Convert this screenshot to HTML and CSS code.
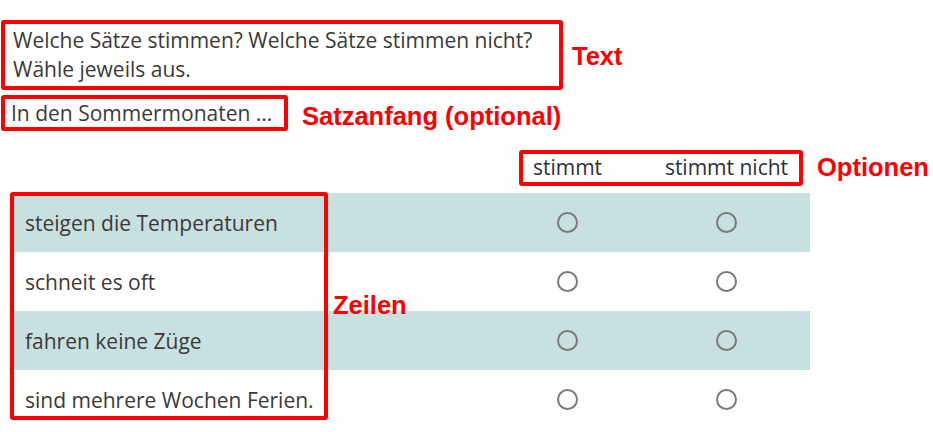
FILE: index.html
```html
<!DOCTYPE html>
<html lang="de">
<head>
<meta charset="utf-8">
<link rel="stylesheet" href="styles.css">
</head>
<body>
<div class="page">
  <div class="question">Welche Sätze stimmen? Welche Sätze stimmen nicht?<br>Wähle jeweils aus.</div>
  <div class="start">In den Sommermonaten ...</div>
  <div class="grid">
    <div class="head empty"></div>
    <div class="head">stimmt</div>
    <div class="head last">stimmt nicht</div>

    <div class="cell label alt">steigen die Temperaturen</div>
    <div class="cell alt"><span class="radio"></span></div>
    <div class="cell alt last"><span class="radio"></span></div>

    <div class="cell label">schneit es oft</div>
    <div class="cell"><span class="radio"></span></div>
    <div class="cell last"><span class="radio"></span></div>

    <div class="cell label alt">fahren keine Züge</div>
    <div class="cell alt"><span class="radio"></span></div>
    <div class="cell alt last"><span class="radio"></span></div>

    <div class="cell label">sind mehrere Wochen Ferien.</div>
    <div class="cell"><span class="radio"></span></div>
    <div class="cell last"><span class="radio"></span></div>
  </div>

  <div class="box box-text"></div>
  <div class="note note-text">Text</div>
  <div class="box box-start"></div>
  <div class="note note-start">Satzanfang (optional)</div>
  <div class="box box-options"></div>
  <div class="note note-options">Optionen</div>
  <div class="box box-rows"></div>
  <div class="note note-rows">Zeilen</div>
</div>
</body>
</html>
```
FILE: styles.css
```css
html, body {
  margin: 0;
  padding: 0;
  background: #fff;
}
.page {
  position: relative;
  width: 933px;
  height: 432px;
  overflow: hidden;
  font-family: "Open Sans", "Noto Sans", sans-serif;
  color: #3a3a3a;
  font-size: 21px;
}
.question {
  padding: 26px 0 0 13px;
  line-height: 29px;
}
.start {
  padding: 17px 0 0 11px;
  line-height: 24px;
}
.grid {
  display: grid;
  grid-template-columns: 475px 159px 163px;
  margin: 25px 0 0 13px;
  width: 797px;
}
.head {
  height: 43px;
  line-height: 34px;
  text-align: center;
  color: #2e2f3c;
}
.cell {
  height: 59px;
  display: flex;
  align-items: center;
  justify-content: center;
}
.last {
  padding-right: 4px;
}
.cell.label {
  justify-content: flex-start;
  padding-left: 12px;
}
.alt {
  background: #c8e0e0;
}
.radio {
  width: 17px;
  height: 17px;
  border: 2px solid #7a7a7a;
  border-radius: 50%;
  box-sizing: content-box;
}
.box {
  position: absolute;
  border: 4px solid #ff0000;
  border-radius: 3px;
}
.note {
  position: absolute;
  color: #ff0000;
  font-family: "Liberation Sans", Arial, sans-serif;
  font-weight: bold;
  font-size: 25.5px;
  line-height: 28px;
}
.box-text { left: 1px; top: 20px; width: 554px; height: 62px; }
.note-text { left: 572px; top: 42px; }
.box-start { left: 1px; top: 95px; width: 279px; height: 28px; }
.note-start { left: 302px; top: 102px; }
.box-options { left: 519px; top: 150px; width: 276px; height: 28px; }
.note-options { left: 817px; top: 153px; }
.box-rows { left: 10px; top: 192px; width: 310px; height: 220px; }
.note-rows { left: 333px; top: 291px; }
```
